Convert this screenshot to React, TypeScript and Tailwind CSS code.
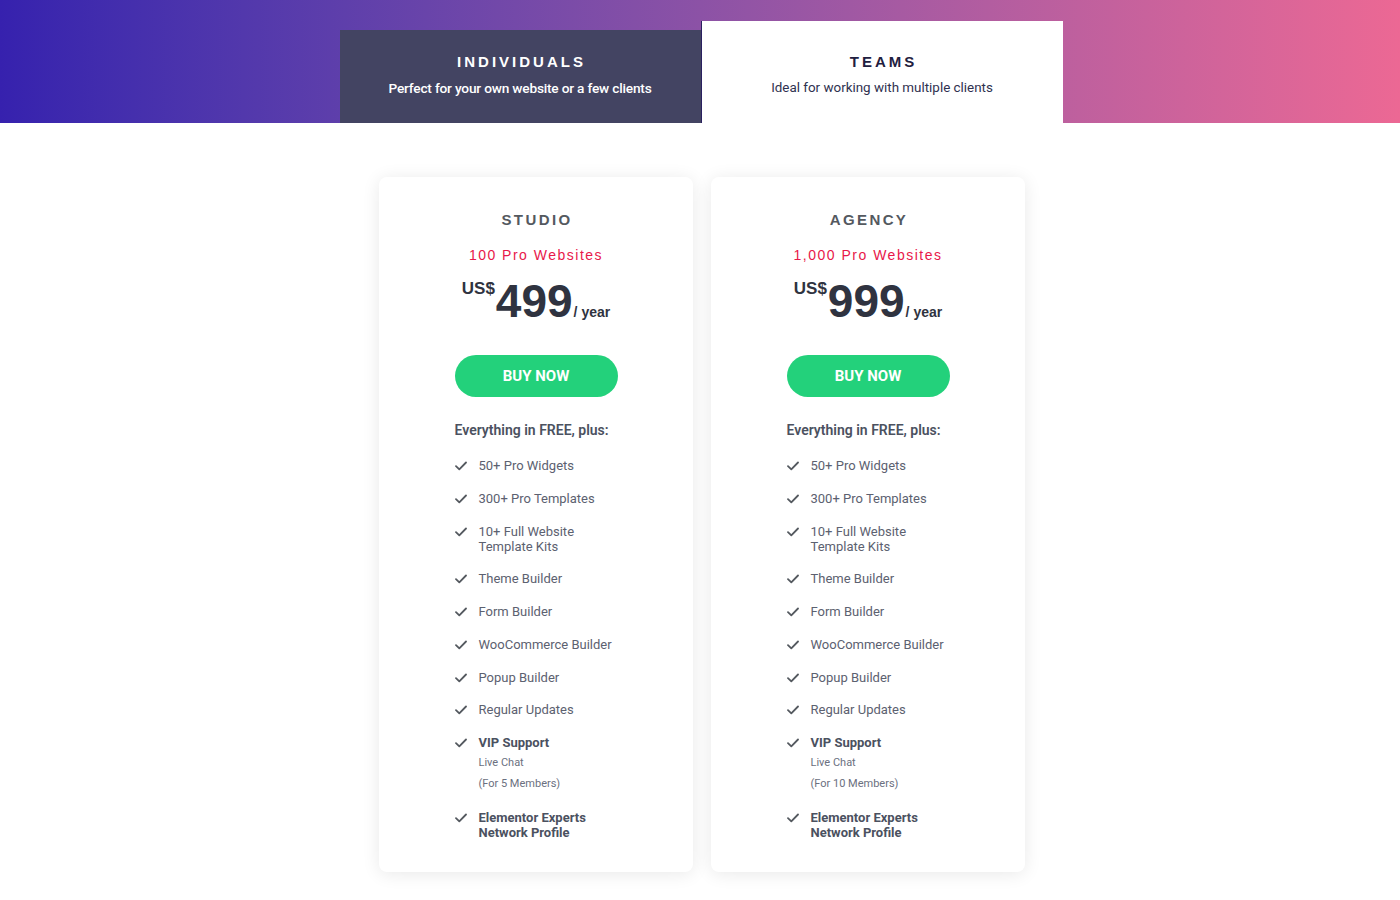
import React from 'react';

type Feature = { label: string; bold?: boolean; notes?: string[] };

const Check = () => (
  <svg viewBox="0 0 12 10" className="w-[12px] h-[10px] mt-[3px] shrink-0" fill="none">
    <path d="M1 5.2 L4.3 8.3 L11 1.5" stroke="#54595f" strokeWidth="1.8" strokeLinecap="round" strokeLinejoin="round" />
  </svg>
);

const plans = [
  { name: 'STUDIO', sites: '100 Pro Websites', price: '499', members: '(For 5 Members)' },
  { name: 'AGENCY', sites: '1,000 Pro Websites', price: '999', members: '(For 10 Members)' },
];

const PlanCard = ({ plan }: { plan: (typeof plans)[number] }) => {
  const features: Feature[] = [
    { label: '50+ Pro Widgets' },
    { label: '300+ Pro Templates' },
    { label: '10+ Full Website Template Kits' },
    { label: 'Theme Builder' },
    { label: 'Form Builder' },
    { label: 'WooCommerce Builder' },
    { label: 'Popup Builder' },
    { label: 'Regular Updates' },
    { label: 'VIP Support', bold: true, notes: ['Live Chat', plan.members] },
    { label: 'Elementor Experts Network Profile', bold: true },
  ];

  return (
    <div className="w-[314px] bg-white rounded-[8px] shadow-[0_2px_18px_rgba(0,0,0,0.09)] pt-[33px] pb-[32px] flex flex-col items-center">
      <div className="text-[15px] font-semibold tracking-[2.4px] text-[#54595f] leading-[20px] font-['Liberation_Sans',sans-serif] pl-[2px]">
        {plan.name}
      </div>
      <div className="mt-[16px] text-[14px] tracking-[1.5px] text-[#e8174a] leading-[18px] font-['Liberation_Sans',sans-serif]">
        {plan.sites}
      </div>
      <div className="mt-[14px] flex items-start text-[#2f3340] font-['Liberation_Sans',sans-serif] font-bold">
        <span className="text-[17px] leading-none mt-[2px]">US$</span>
        <span className="text-[46px] leading-[40px] mt-[3px] ml-[1px]">{plan.price}</span>
        <span className="text-[14px] leading-none self-end mb-[2px] ml-[1px]">/ year</span>
      </div>
      <button className="mt-[34px] w-[163px] h-[42px] rounded-full bg-[#23d17b] text-white text-[15px] font-bold font-['Roboto',sans-serif]">
        BUY NOW
      </button>
      <div className="w-[163px] mt-[24px] font-['Roboto',sans-serif]">
        <div className="text-[14px] font-semibold text-[#4b5160] leading-[18px] whitespace-nowrap">Everything in FREE, plus:</div>
        <ul className="mt-[19px] flex flex-col gap-[17.75px]">
          {features.map((f) => (
            <li key={f.label} className="flex gap-[12px]">
              <Check />
              <div className="w-[138px]">
                <div className={`text-[13px] leading-[15px] ${f.bold ? 'font-bold text-[#4b5160]' : 'text-[#5c6170]'}`}>
                  {f.label}
                </div>
                {f.notes && (
                  <div className="flex flex-col gap-[8px] mt-[6px] mb-[2px]">
                    {f.notes.map((n) => (
                      <div key={n} className="text-[11px] leading-[13px] text-[#6b7080]">{n}</div>
                    ))}
                  </div>
                )}
              </div>
            </li>
          ))}
        </ul>
      </div>
    </div>
  );
};

export default function App() {
  return (
    <div className="min-h-[900px] bg-white font-['Roboto',sans-serif]">
      <header className="h-[123px] bg-gradient-to-r from-[#3621ae] to-[#ec6894] flex justify-center items-end pl-[2px]">
        <div className="flex items-end w-[723px]">
          <div className="w-[361px] h-[93px] bg-[#434462] flex flex-col items-center justify-end pb-[26px]">
            <div className="text-[15px] font-bold tracking-[3px] text-white leading-[18px] font-['Liberation_Sans',sans-serif] pl-[3px]">
              INDIVIDUALS
            </div>
            <div className="mt-[8px] text-[13.7px] font-medium text-white leading-[18px] tracking-[-0.2px]">
              Perfect for your own website or a few clients
            </div>
          </div>
          <div className="w-[362px] h-[102px] bg-white border-l border-[#2a2160] flex flex-col items-center justify-end pb-[26px]">
            <div className="text-[15px] font-semibold tracking-[3px] text-[#1f2040] leading-[18px] font-['Liberation_Sans',sans-serif] pl-[3px]">
              TEAMS
            </div>
            <div className="mt-[8px] text-[13.4px] text-[#2f3150] leading-[18px]">
              Ideal for working with multiple clients
            </div>
          </div>
        </div>
      </header>
      <main className="flex justify-center gap-[18px] pt-[54px] pb-[29px] pl-[4px]">
        {plans.map((p) => (
          <PlanCard key={p.name} plan={p} />
        ))}
      </main>
    </div>
  );
}
